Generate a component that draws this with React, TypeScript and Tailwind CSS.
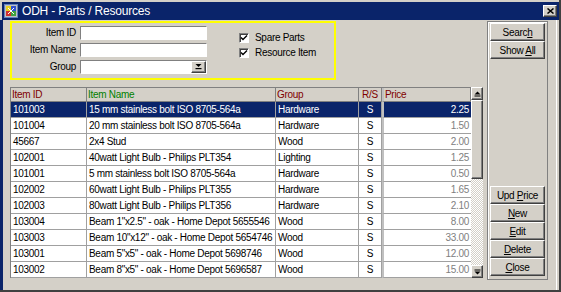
import React from 'react';

const rows = [
  ['101003', '15 mm stainless bolt ISO 8705-564a', 'Hardware', 'S', '2.25'],
  ['101004', '20 mm stainless bolt ISO 8705-564a', 'Hardware', 'S', '1.50'],
  ['45667', '2x4 Stud', 'Wood', 'S', '2.00'],
  ['102001', '40watt Light Bulb - Philips PLT354', 'Lighting', 'S', '1.25'],
  ['101001', '5 mm stainless bolt ISO 8705-564a', 'Hardware', 'S', '0.50'],
  ['102002', '60watt Light Bulb - Philips PLT355', 'Hardware', 'S', '1.65'],
  ['102003', '80watt Light Bulb - Philips PLT356', 'Hardware', 'S', '2.10'],
  ['103004', 'Beam 1"x2.5" - oak - Home Depot 5655546', 'Wood', 'S', '8.00'],
  ['103003', 'Beam 10"x12" - oak - Home Depot 5654746', 'Wood', 'S', '33.00'],
  ['103001', 'Beam 5"x5" - oak - Home Depot 5698746', 'Wood', 'S', '12.00'],
  ['103002', 'Beam 8"x5" - oak - Home Depot 5696587', 'Wood', 'S', '15.00'],
];

const raised =
  'bg-[#d4d0c8] border border-t-white border-l-white border-r-[#404040] border-b-[#404040] shadow-[inset_-1px_-1px_0_#808080]';

function Btn({ children }: { children: React.ReactNode }) {
  return (
    <div className={`${raised} h-[18px] w-[55px] flex items-center justify-center text-black`}>
      <span>{children}</span>
    </div>
  );
}

function Check({ label }: { label: string }) {
  return (
    <div className="flex items-center h-[13px]">
      <div className="w-[10px] h-[10px] bg-white border border-t-[#808080] border-l-[#808080] border-r-white border-b-white shadow-[inset_1px_1px_0_#404040] flex items-center justify-center">
        <svg width="8" height="8" viewBox="0 0 8 8">
          <path d="M1 3.5 L3 5.5 L7 1.5" stroke="#000" strokeWidth="1.4" fill="none" />
        </svg>
      </div>
      <span className="ml-[6px]">{label}</span>
    </div>
  );
}

function Field({ combo }: { combo?: boolean }) {
  return (
    <div className="h-[14px] bg-white border border-t-[#808080] border-l-[#808080] border-r-white border-b-white flex justify-end">
      {combo && (
        <div className={`${raised} w-[15px] h-full flex items-center justify-center`}>
          <svg width="7" height="7" viewBox="0 0 7 7">
            <path d="M0.5 1 H6.5 L3.5 4 Z" fill="#000" />
            <rect x="0.5" y="5" width="6" height="1.2" fill="#000" />
          </svg>
        </div>
      )}
    </div>
  );
}

function Arrow({ up }: { up?: boolean }) {
  return (
    <div className={`${raised} h-[13px] w-[12px] flex items-center justify-center`}>
      <svg width="7" height="6" viewBox="0 0 7 6">
        {up ? (
          <>
            <path d="M0.5 3.5 H6.5 L3.5 0.5 Z" fill="#000" />
            <rect x="0.5" y="4.5" width="6" height="1" fill="#000" />
          </>
        ) : (
          <>
            <rect x="0.5" y="0.5" width="6" height="1" fill="#000" />
            <path d="M0.5 2.5 H6.5 L3.5 5.5 Z" fill="#000" />
          </>
        )}
      </svg>
    </div>
  );
}

const widths = ['w-[76px]', 'w-[189px]', 'w-[83px]', 'w-[23px]', 'w-[89px]'];

export default function App() {
  return (
    <div className="w-[561px] h-[292px] bg-[#d4d0c8] flex flex-col border-r-2 border-b-2 border-[#404040] font-['Liberation_Sans',Arial,sans-serif] text-[10px] tracking-[-0.3px] text-black overflow-hidden">
      {/* title bar */}
      <div className="ml-[2px] mt-[2px] h-[18px] bg-[#0a246a] flex items-center pl-[2px] pr-[2px]">
        <svg width="14" height="14" viewBox="0 0 14 14">
          <rect x="0.5" y="0.5" width="13" height="13" fill="#c0c0c0" stroke="#6080c0" />
          <rect x="2" y="2" width="5" height="5" fill="#e8d020" />
          <rect x="7" y="2" width="5" height="5" fill="#3050d0" />
          <rect x="2" y="7" width="5" height="5" fill="#d03030" />
          <rect x="7" y="7" width="5" height="5" fill="#40a040" />
          <path d="M4 4 L10 10 M10 4 L4 10" stroke="#fff" strokeWidth="1" />
        </svg>
        <span className="ml-[4px] text-white text-[12px] tracking-[-0.2px] leading-none">ODH - Parts / Resources</span>
        <div className={`${raised} ml-auto w-[14px] h-[12px] flex items-center justify-center`}>
          <svg width="7" height="6" viewBox="0 0 7 6">
            <path d="M0.5 0.5 L6.5 5.5 M6.5 0.5 L0.5 5.5" stroke="#000" strokeWidth="1.5" />
          </svg>
        </div>
      </div>

      {/* client area */}
      <div className="flex-1 flex border-l-[3px] border-l-[#0a246a] pl-[7px] pt-[1px] mr-[2px] border-r border-r-white">
        <div className="w-[472px] flex flex-col">
          {/* search criteria */}
          <div className="w-[326px] h-[59px] border-2 border-[#ffff00] flex">
            <div className="grid grid-cols-[64px_127px] gap-x-[4px] gap-y-[2px] content-start pt-[2px] items-center">
              <span className="text-right">Item ID</span>
              <Field />
              <span className="text-right">Item Name</span>
              <Field />
              <span className="text-right">Group</span>
              <Field combo />
            </div>
            <div className="ml-[32px] pt-[8px] flex flex-col gap-[2px]">
              <Check label="Spare Parts" />
              <Check label="Resource Item" />
            </div>
          </div>

          {/* table */}
          <div className="mt-[7px] flex">
            <div className="flex flex-col border-l border-t border-[#808080]">
              <div className="flex h-[14px] bg-[#d4d0c8]">
                {[
                  ['Item ID', 'text-[#800000]', 'pl-[1px]'],
                  ['Item Name', 'text-[#008000]', 'pl-[1px]'],
                  ['Group', 'text-[#800000]', 'pl-[1px]'],
                  ['R/S', 'text-[#800000]', 'justify-center'],
                  ['Price', 'text-[#800000]', 'pl-[1px]'],
                ].map(([t, c, a], i) => (
                  <div
                    key={t}
                    className={`${widths[i]} ${c} ${a} flex items-center border-b border-r border-[#808080] ${i === 4 ? 'border-l-2 border-l-[#c0c0c0]' : ''}`}
                  >
                    {t}
                  </div>
                ))}
              </div>
              {rows.map((r, ri) => {
                const sel = ri === 0;
                return (
                  <div key={r[0]} className={`flex h-[16px] ${sel ? 'bg-[#0a246a] text-white' : 'bg-white'}`}>
                    <div className={`${widths[0]} pl-[2px] flex items-center border-b border-r border-[#a0a0a0]`}>{r[0]}</div>
                    <div className={`${widths[1]} pl-[2px] flex items-center border-b border-r border-[#a0a0a0] whitespace-nowrap overflow-hidden`}>{r[1]}</div>
                    <div className={`${widths[2]} pl-[2px] flex items-center border-b border-r border-[#a0a0a0]`}>{r[2]}</div>
                    <div className={`${widths[3]} flex items-center justify-center border-b border-r border-[#a0a0a0]`}>{r[3]}</div>
                    <div
                      className={`${widths[4]} pr-[2px] flex items-center justify-end border-b border-[#a0a0a0] border-l-2 border-l-[#c0c0c0] ${sel ? 'text-white' : 'text-[#808080]'}`}
                    >
                      {r[4]}
                    </div>
                  </div>
                );
              })}
            </div>
            {/* scrollbar */}
            <div className="w-[12px] flex flex-col">
              <Arrow up />
              <div className={`${raised} h-[79px]`} />
              <div className="flex-1 bg-[repeating-conic-gradient(#d4d0c8_0_25%,#ffffff_0_50%)] bg-size-[2px_2px]" />
              <Arrow />
            </div>
          </div>
        </div>

        {/* button panel */}
        <div className="ml-[5px] w-[61px] h-[259px] border border-[#808080] shadow-[inset_1px_1px_0_#ffffff] flex flex-col pl-[2px] pt-[1px] pb-[3px]">
          <Btn>Searc<u>h</u></Btn>
          <Btn>Show <u>A</u>ll</Btn>
          <div className="flex-1" />
          <Btn>Upd <u>P</u>rice</Btn>
          <Btn><u>N</u>ew</Btn>
          <Btn><u>E</u>dit</Btn>
          <Btn><u>D</u>elete</Btn>
          <Btn><u>C</u>lose</Btn>
        </div>
      </div>
    </div>
  );
}
